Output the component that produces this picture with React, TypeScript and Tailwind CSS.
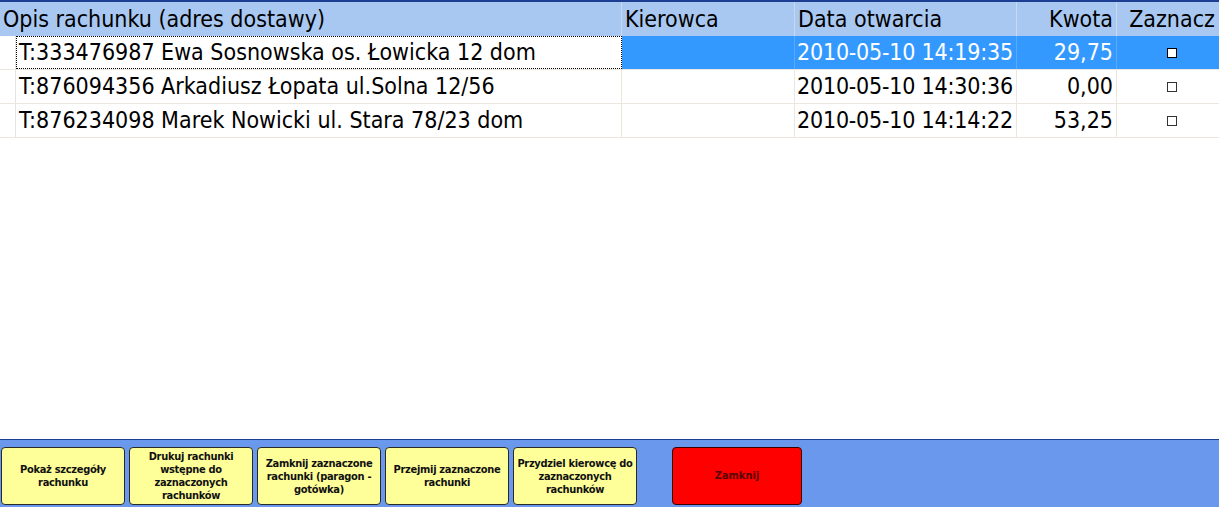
const rows = [
  { opis: "T:333476987 Ewa Sosnowska os. Łowicka 12 dom", kierowca: "", data: "2010-05-10 14:19:35", kwota: "29,75" },
  { opis: "T:876094356 Arkadiusz Łopata ul.Solna 12/56", kierowca: "", data: "2010-05-10 14:30:36", kwota: "0,00" },
  { opis: "T:876234098 Marek Nowicki ul. Stara 78/23 dom", kierowca: "", data: "2010-05-10 14:14:22", kwota: "53,25" },
];

const buttons = [
  "Pokaż szczegóły rachunku",
  "Drukuj rachunki wstępne do zaznaczonych rachunków",
  "Zamknij zaznaczone rachunki (paragon - gotówka)",
  "Przejmij zaznaczone rachunki",
  "Przydziel kierowcę do zaznaczonych rachunków",
];

const font = { fontFamily: "'DejaVu Sans Condensed', 'DejaVu Sans', sans-serif" };

export default function App() {
  const selected = 0;

  return (
    <div className="w-[1219px] h-[507px] flex flex-col bg-white overflow-hidden" style={font}>
      {/* --- GRID --- */}
      <div className="flex-1 flex flex-col">
        <div className="flex h-[36px] bg-[#a8c8f2] border-t-2 border-[#1c3f94] text-[23px] text-black leading-none whitespace-nowrap">
          <div className="w-[622px] flex items-center pl-[3px] border-r border-[#c8d8ee]">Opis rachunku (adres dostawy)</div>
          <div className="w-[173px] flex items-center pl-[3px] border-r border-[#c8d8ee]">Kierowca</div>
          <div className="w-[222px] flex items-center pl-[3px] border-r border-[#c8d8ee]">Data otwarcia</div>
          <div className="w-[100px] flex items-center justify-end pr-[3px] border-r border-[#c8d8ee]">Kwota</div>
          <div className="flex-1 flex items-center justify-center pl-[8px]">Zaznacz</div>
        </div>

        {rows.map((r, i) => {
          const sel = i === selected;
          return (
            <div key={i} className="flex h-[34px] text-[23px] leading-none whitespace-nowrap border-b border-[#ebe7dc]">
              <div className="w-[16px] border-r border-[#e4e4e4]" />
              <div
                className={
                  sel
                    ? "w-[606px] flex items-center pl-[2px] border border-dotted border-black"
                    : "w-[606px] flex items-center pl-[3px] border-r border-[#ebe7dc]"
                }
              >
                {r.opis}
              </div>
              <div className={sel ? "w-[173px] bg-[#3399ff] border-r border-[#5aa8ff]" : "w-[173px] border-r border-[#ebe7dc]"}>
                {r.kierowca}
              </div>
              <div
                className={
                  sel
                    ? "w-[222px] flex items-center pl-[2px] tracking-[-0.2px] overflow-hidden bg-[#3399ff] text-white border-r border-[#5aa8ff]"
                    : "w-[222px] flex items-center pl-[2px] tracking-[-0.2px] overflow-hidden border-r border-[#ebe7dc]"
                }
              >
                {r.data}
              </div>
              <div
                className={
                  sel
                    ? "w-[100px] flex items-center justify-end pr-[3px] bg-[#3399ff] text-white border-r border-[#5aa8ff]"
                    : "w-[100px] flex items-center justify-end pr-[3px] border-r border-[#ebe7dc]"
                }
              >
                {r.kwota}
              </div>
              <div className={sel ? "flex-1 flex items-center justify-center pl-[8px] bg-[#3399ff]" : "flex-1 flex items-center justify-center pl-[8px]"}>
                <div className={sel ? "w-[10px] h-[10px] border border-black bg-white" : "w-[10px] h-[10px] border border-[#333] bg-white"} />
              </div>
            </div>
          );
        })}
      </div>

      {/* --- BOTTOM BAR --- */}
      <div className="h-[68px] bg-[#6a98ec] border-t border-[#1c3f94] flex items-start pt-[7px] pl-[1px]">
        <div className="flex gap-[4px]">
          {buttons.map((b) => (
            <div
              key={b}
              className="w-[124px] h-[58px] bg-[#ffff99] border border-[#2a2a2a] rounded-[4px] flex items-center justify-center text-center px-0 text-[11px] tracking-[-0.3px] font-bold leading-[13px] text-[#111]"
            >
              {b}
            </div>
          ))}
        </div>
        <div className="ml-[35px] w-[130px] h-[58px] bg-[#ff0000] border border-[#3a0000] rounded-[4px] flex items-center justify-center text-[11px] font-bold text-[#5a0000]">
          Zamknij
        </div>
      </div>
    </div>
  );
}
